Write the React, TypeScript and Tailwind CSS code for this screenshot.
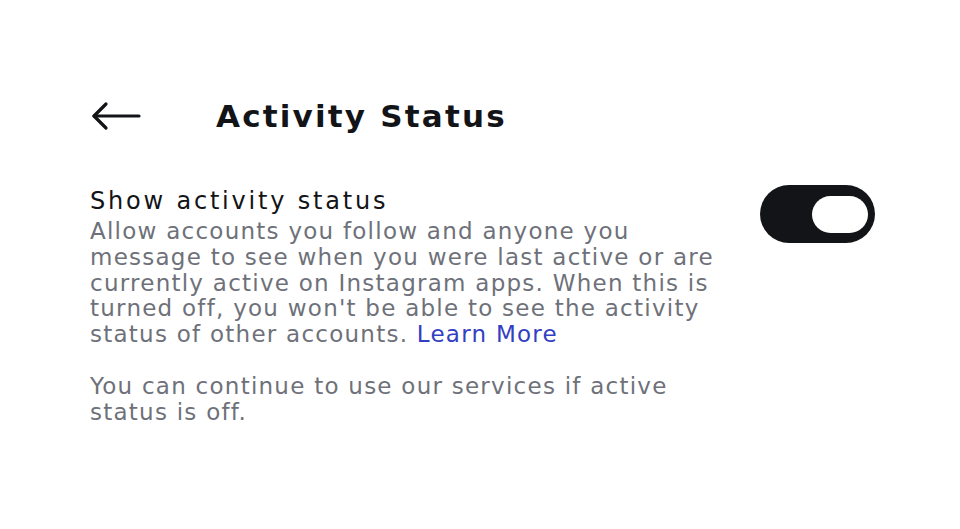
import React from 'react';

export default function App() {
  return (
    <div className="w-[960px] h-[529px] bg-white font-['DejaVu_Sans',sans-serif] text-[#121417]">
      {/* Header */}
      <div className="flex items-center pt-[98px] pl-[91px]">
        <svg width="50" height="30" viewBox="0 0 50 30" fill="none" stroke="#121417" strokeWidth="3.2" strokeLinecap="round" strokeLinejoin="round">
          <path d="M48 15H3" />
          <path d="M15 3L3 15l12 12" />
        </svg>
        <h1 className="ml-[75px] text-[31px] font-bold tracking-[2.2px] leading-[36px]">Activity Status</h1>
      </div>

      {/* Setting row */}
      <div className="flex items-start pl-[90px] pr-[85px] mt-[52px]">
        <div className="flex-1">
          <div className="text-[24px] leading-[30px] tracking-[2.8px] text-[#121417]">Show activity status</div>
          <p className="mt-[3px] text-[23px] leading-[25.8px] tracking-[1.25px] text-[#6e7179] whitespace-nowrap">
            Allow accounts you follow and anyone you<br />
            message to see when you were last active or are<br />
            currently active on Instagram apps. When this is<br />
            turned off, you won't be able to see the activity<br />
            status of other accounts. <span className="text-[#3140c2]">Learn More</span>
          </p>
          <p className="mt-[25.8px] text-[23px] leading-[25.8px] tracking-[1.25px] text-[#6e7179] whitespace-nowrap">
            You can continue to use our services if active<br />
            status is off.
          </p>
        </div>
        <div className="ml-auto -mt-[1px] flex items-center justify-end w-[115px] h-[58px] rounded-full bg-[#121417] pr-[7px]">
          <div className="w-[56px] h-[37px] rounded-full bg-white" />
        </div>
      </div>
    </div>
  );
}
